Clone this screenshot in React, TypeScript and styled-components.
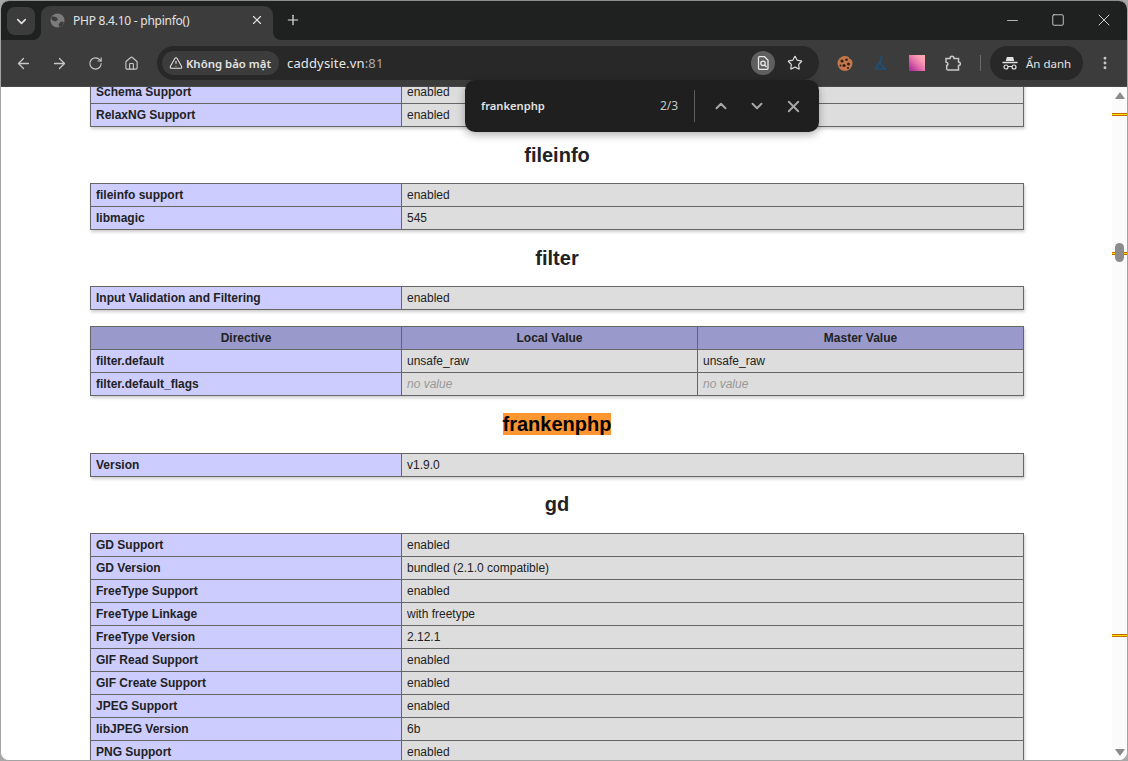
import React from 'react';
import styled, { createGlobalStyle } from 'styled-components';
import {
  ArrowLeft,
  ArrowRight,
  ChevronDown,
  ChevronUp,
  EllipsisVertical,
  House,
  Minus,
  Plus,
  RotateCw,
  Square,
  Star,
  TriangleAlert,
  X,
} from 'lucide-react';

const GlobalStyle = createGlobalStyle`
  html, body {
    margin: 0;
    padding: 0;
    width: 1128px;
    height: 761px;
    overflow: hidden;
    background: #a8a8a8;
  }
`;

const Win = styled.div`
  width: 1128px;
  height: 761px;
  box-sizing: border-box;
  border: 1px solid #a3a3a3;
  border-top-color: #8d8d8d;
  border-radius: 9px;
  overflow: hidden;
  display: flex;
  flex-direction: column;
  position: relative;
  background: #fff;
`;

const TabStrip = styled.div`
  height: 39px;
  background: #1f2120;
  display: flex;
  align-items: flex-end;
  flex: none;
  color: #e3e3e3;
  font-family: 'Noto Sans', 'Liberation Sans', sans-serif;
`;

const TabSearch = styled.div`
  width: 28px;
  height: 28px;
  margin: 0 0 5px 6px;
  border-radius: 8px;
  background: #3c3c3c;
  display: flex;
  align-items: center;
  justify-content: center;
  color: #e3e3e3;
`;

const Tab = styled.div`
  width: 232px;
  height: 34px;
  margin-left: 6px;
  padding: 0 9px 6px 9px;
  box-sizing: border-box;
  background: #3c3c3c;
  border-radius: 9px 9px 0 0;
  display: flex;
  align-items: center;
  position: relative;

  &::before,
  &::after {
    content: '';
    position: absolute;
    bottom: 0;
    width: 8px;
    height: 8px;
  }
  &::before {
    left: -8px;
    background: radial-gradient(circle at 0 0, #1f2120 7.5px, #3c3c3c 8.5px);
  }
  &::after {
    right: -8px;
    background: radial-gradient(circle at 100% 0, #1f2120 7.5px, #3c3c3c 8.5px);
  }
`;

const TabTitle = styled.span`
  flex: 1;
  margin-left: 8px;
  font-size: 12px;
  letter-spacing: -0.25px;
  color: #e3e3e3;
  white-space: nowrap;
`;

const NewTab = styled.div`
  margin: 0 0 12px 12px;
  width: 16px;
  height: 16px;
  color: #e3e3e3;
  display: flex;
`;

const WindowControls = styled.div`
  margin-left: auto;
  height: 38px;
  display: flex;
  align-self: flex-start;
`;

const WindowButton = styled.div`
  width: 46px;
  height: 38px;
  display: flex;
  align-items: center;
  justify-content: center;
  color: #f0f0f0;
`;

const Toolbar = styled.div`
  height: 47px;
  box-sizing: border-box;
  background: #3c3c3c;
  border-bottom: 1px solid #4a4a4a;
  flex: none;
  display: flex;
  align-items: center;
  padding-left: 4px;
  color: #c7c7c7;
  font-family: 'Noto Sans', 'Liberation Sans', sans-serif;
`;

const NavButton = styled.div`
  width: 36px;
  height: 34px;
  display: flex;
  align-items: center;
  justify-content: center;
  color: #c7c7c7;
`;

const Omnibox = styled.div`
  width: 662px;
  height: 34px;
  margin-left: 8px;
  flex: none;
  background: #282828;
  border-radius: 17px;
  display: flex;
  align-items: center;
  padding: 0 8px 0 5px;
  box-sizing: border-box;
`;

const SecurityChip = styled.div`
  width: 117px;
  height: 24px;
  border-radius: 12px;
  background: #3c3c3c;
  display: flex;
  align-items: center;
  padding-left: 7px;
  box-sizing: border-box;
  color: #e3e3e3;
  font-size: 11.4px;
  font-weight: 600;
  white-space: nowrap;
  flex: none;
  gap: 3px;
`;

const Url = styled.div`
  margin-left: 8px;
  flex: 1;
  font-size: 13px;
  letter-spacing: 0.15px;
  color: #e6e6e6;

  span {
    color: #a8a8a8;
  }
`;

const FindBadge = styled.div`
  width: 24px;
  height: 24px;
  border-radius: 50%;
  background: #5f5f5f;
  display: flex;
  align-items: center;
  justify-content: center;
`;

const StarSlot = styled.div`
  width: 32px;
  height: 24px;
  margin-left: 4px;
  display: flex;
  align-items: center;
  justify-content: center;
  color: #d6d6d6;
`;

const Extensions = styled.div`
  display: flex;
  align-items: center;
  margin-left: 8px;
`;

const ExtSlot = styled.div`
  width: 36px;
  height: 34px;
  display: flex;
  align-items: center;
  justify-content: center;
`;

const GradientTile = styled.div`
  width: 16px;
  height: 16px;
  background: linear-gradient(45deg, #a21f9c 0%, #dd66a8 40%, #fb98b4 70%, #ffb0b0 100%);
`;

const Divider = styled.div`
  width: 1px;
  height: 16px;
  margin: 0 9px 0 9px;
  background: #6a6a6a;
`;

const Profile = styled.div`
  width: 93px;
  height: 34px;
  border-radius: 17px;
  background: #282828;
  display: flex;
  align-items: center;
  padding-left: 12px;
  box-sizing: border-box;
  gap: 8px;
  color: #e3e3e3;
  font-size: 11.5px;
`;

const MenuButton = styled.div`
  width: 44px;
  height: 34px;
  display: flex;
  align-items: center;
  justify-content: center;
  color: #c7c7c7;
`;

const Body = styled.div`
  flex: 1;
  display: flex;
  min-height: 0;
  position: relative;
`;

const Page = styled.div`
  flex: 1;
  min-width: 0;
  overflow: hidden;
  background: #fff;
  color: #222;
  font-family: 'Liberation Sans', Arial, sans-serif;
  text-align: center;
  padding-left: 1px;
`;

const EdgeTicks = styled.div`
  position: absolute;
  left: -1px;
  top: 2px;
  width: 1px;
  height: 148px;
  background: repeating-linear-gradient(
    180deg,
    #8a5a3a 0,
    #8a5a3a 2px,
    transparent 2px,
    transparent 15px
  );
`;

const Table = styled.table<{ $first?: boolean }>`
  border-collapse: collapse;
  border: 0;
  width: 934px;
  margin: ${(p) => (p.$first ? '-7px auto 16px' : '16px auto')};
  text-align: left;
  box-shadow: 1px 2px 3px rgba(0, 0, 0, 0.2);
`;

const Label = styled.td`
  border: 1px solid #666;
  font-size: 12px;
  vertical-align: baseline;
  padding: 4px 5px;
  background: #ccf;
  width: 300px;
  font-weight: bold;
`;

const Value = styled.td`
  border: 1px solid #666;
  font-size: 12px;
  vertical-align: baseline;
  padding: 4px 5px;
  background: #ddd;
  max-width: 300px;
`;

const Head = styled.th<{ $width?: number }>`
  border: 1px solid #666;
  font-size: 12px;
  vertical-align: baseline;
  padding: 4px 5px;
  background: #99c;
  font-weight: bold;
  text-align: center;
  ${(p) => (p.$width ? `width: ${p.$width}px;` : '')}
`;

const NoValue = styled.i`
  color: #999;
`;

const Heading = styled.h2`
  font-size: 20px;
  font-weight: bold;
  margin: 16.6px 0;
`;

const Match = styled.span`
  background: #ff9632;
  color: #000;
`;

const Scrollbar = styled.div`
  width: 15px;
  flex: none;
  background: #fbfbfb;
  position: relative;
`;

const Arrow = styled.div<{ $down?: boolean }>`
  position: absolute;
  left: 3px;
  ${(p) => (p.$down ? 'bottom: 4px;' : 'top: 5px;')}
  width: 0;
  height: 0;
  border-left: 5px solid transparent;
  border-right: 5px solid transparent;
  ${(p) => (p.$down ? 'border-top: 7px solid #8a8a8a;' : 'border-bottom: 7px solid #8a8a8a;')}
`;

const Marker = styled.div<{ $top: number }>`
  position: absolute;
  left: 0;
  right: 0;
  top: ${(p) => p.$top}px;
  height: 3px;
  background: #ffe000;
  border-top: 1px solid #c46a00;
  border-bottom: 1px solid #c46a00;
  box-sizing: border-box;
`;

const Thumb = styled.div`
  position: absolute;
  left: 3px;
  top: 156px;
  width: 9px;
  height: 19px;
  border-radius: 5px;
  background: #8c8c8c;
`;

const FindBar = styled.div`
  position: absolute;
  left: 464px;
  top: 79px;
  width: 354px;
  height: 52px;
  box-sizing: border-box;
  background: #1f1f1f;
  border-radius: 10px;
  box-shadow: 0 3px 8px rgba(0, 0, 0, 0.3);
  display: flex;
  align-items: center;
  padding-left: 16px;
  font-family: 'Noto Sans', 'Liberation Sans', sans-serif;
`;

const FindText = styled.span`
  font-size: 11.2px;
  font-weight: 600;
  color: #e3e3e3;
  width: 179px;
  margin-bottom: 2px;
`;

const FindCount = styled.span`
  font-size: 12px;
  color: #c4c7c5;
  width: 34px;
  margin-bottom: 2px;
`;

const FindDivider = styled.div`
  width: 1px;
  height: 32px;
  background: #5e5e5e;
`;

const FindButton = styled.div`
  width: 36px;
  height: 20px;
  display: flex;
  align-items: center;
  justify-content: center;
  color: #a8a8a8;
`;

const FindButtons = styled.div`
  display: flex;
  margin-left: 8px;
`;

const rows = (data: [string, string][]) =>
  data.map(([k, v]) => (
    <tr key={k}>
      <Label>{k}</Label>
      <Value>{v}</Value>
    </tr>
  ));

function Globe() {
  return (
    <svg width="15" height="15" viewBox="0 0 16 16">
      <circle cx="8" cy="8" r="7.5" fill="#7b7b7b" />
      <path d="M3 3.5 7 4.5 8.5 7 6 9 3 8 1 6zM9 12l3-3 3 .5-2 4-3 1.5z" fill="#3c3c3c" />
    </svg>
  );
}

function FindPageIcon() {
  return (
    <svg width="16" height="16" viewBox="0 0 16 16" fill="none" stroke="#e8e8e8" strokeWidth="1.3">
      <path d="M4.5 14.3c-.6 0-1-.4-1-1V2.7c0-.6.4-1 1-1h5l3.500 3.500v8.100c0 .6-.4 1-1 1z" />
      <circle cx="8" cy="8.300" r="2.200" />
      <path d="M9.600 10l2 2" />
    </svg>
  );
}

function CookieIcon() {
  return (
    <svg width="16" height="16" viewBox="0 0 16 16">
      <circle cx="8" cy="8.500" r="7.500" fill="#c4774a" />
      <circle cx="14" cy="2" r="2.200" fill="#3c3c3c" />
      <circle cx="5" cy="6" r="1.600" fill="#33201a" />
      <circle cx="9.500" cy="4.800" r="1.300" fill="#33201a" />
      <circle cx="11.500" cy="9" r="1.500" fill="#33201a" />
      <circle cx="7" cy="10.500" r="1.600" fill="#33201a" />
      <circle cx="11" cy="13" r="1.100" fill="#33201a" />
      <circle cx="3.500" cy="10.500" r="0.900" fill="#33201a" />
    </svg>
  );
}

function BranchIcon() {
  return (
    <svg width="14" height="16" viewBox="0 0 14 16" fill="none" stroke="#1d4f77" strokeWidth="2">
      <path d="M8 1 6.500 6C5 9 3 11 1.500 14.500M6.500 8l2 3 3.500 3.500" />
      <path d="M3 14h8" strokeWidth="1.400" />
    </svg>
  );
}

function PuzzleIcon() {
  return (
    <svg width="18" height="18" viewBox="0 0 18 18" fill="none" stroke="#c7c7c7" strokeWidth="1.500">
      <path d="M2 4.500h4c0-3 4-3 4 0h4.500v3.500c2.500 0 2.500 3.500 0 3.500V16H4c-.8 0-1.300-.5-1.300-1.300V11.500c1.800-.5 1.800-3-.7-3.500z" />
    </svg>
  );
}

function IncognitoIcon() {
  return (
    <svg width="16" height="16" viewBox="0 0 16 16" fill="none" stroke="#e3e3e3" strokeWidth="1.200">
      <path d="M3.800 6 4.800 2h6.400l1 4z" fill="#e3e3e3" stroke="none" />
      <path d="M0.500 7.500h15" strokeWidth="1.300" />
      <circle cx="4" cy="12" r="2" />
      <circle cx="12" cy="12" r="2" />
      <path d="M6 11.500h4" />
    </svg>
  );
}

export default function App() {
  return (
    <>
      <GlobalStyle />
      <Win>
        <TabStrip>
          <TabSearch>
            <ChevronDown size={15} strokeWidth={2.5} />
          </TabSearch>
          <Tab>
            <Globe />
            <TabTitle>PHP 8.4.10 - phpinfo()</TabTitle>
            <X size={14} strokeWidth={2} color="#e3e3e3" />
          </Tab>
          <NewTab>
            <Plus size={16} strokeWidth={1.800} />
          </NewTab>
          <WindowControls>
            <WindowButton>
              <Minus size={17} strokeWidth={1} />
            </WindowButton>
            <WindowButton>
              <Square size={14} strokeWidth={1.300} />
            </WindowButton>
            <WindowButton>
              <X size={20} strokeWidth={1} />
            </WindowButton>
          </WindowControls>
        </TabStrip>
        <Toolbar>
          <NavButton>
            <ArrowLeft size={17} strokeWidth={1.800} />
          </NavButton>
          <NavButton>
            <ArrowRight size={17} strokeWidth={1.800} />
          </NavButton>
          <NavButton>
            <RotateCw size={15} strokeWidth={1.800} />
          </NavButton>
          <NavButton>
            <House size={15} strokeWidth={1.800} />
          </NavButton>
          <Omnibox>
            <SecurityChip>
              <TriangleAlert size={14} strokeWidth={1.800} />
              Không bảo mật
            </SecurityChip>
            <Url>
              caddysite.vn<span>:81</span>
            </Url>
            <FindBadge>
              <FindPageIcon />
            </FindBadge>
            <StarSlot>
              <Star size={16} strokeWidth={1.800} />
            </StarSlot>
          </Omnibox>
          <Extensions>
            <ExtSlot>
              <CookieIcon />
            </ExtSlot>
            <ExtSlot>
              <BranchIcon />
            </ExtSlot>
            <ExtSlot>
              <GradientTile />
            </ExtSlot>
            <ExtSlot>
              <PuzzleIcon />
            </ExtSlot>
          </Extensions>
          <Divider />
          <Profile>
            <IncognitoIcon />
            Ẩn danh
          </Profile>
          <MenuButton>
            <EllipsisVertical size={16} strokeWidth={2.400} />
          </MenuButton>
        </Toolbar>
        <Body>
          <EdgeTicks />
          <Page>
            <Table $first>
              <tbody>{rows([['Schema Support', 'enabled'], ['RelaxNG Support', 'enabled']])}</tbody>
            </Table>
            <Heading>fileinfo</Heading>
            <Table>
              <tbody>{rows([['fileinfo support', 'enabled'], ['libmagic', '545']])}</tbody>
            </Table>
            <Heading>filter</Heading>
            <Table>
              <tbody>{rows([['Input Validation and Filtering', 'enabled']])}</tbody>
            </Table>
            <Table>
              <tbody>
                <tr>
                  <Head>Directive</Head>
                  <Head $width={285}>Local Value</Head>
                  <Head>Master Value</Head>
                </tr>
                <tr>
                  <Label>filter.default</Label>
                  <Value>unsafe_raw</Value>
                  <Value>unsafe_raw</Value>
                </tr>
                <tr>
                  <Label>filter.default_flags</Label>
                  <Value>
                    <NoValue>no value</NoValue>
                  </Value>
                  <Value>
                    <NoValue>no value</NoValue>
                  </Value>
                </tr>
              </tbody>
            </Table>
            <Heading>
              <Match>frankenphp</Match>
            </Heading>
            <Table>
              <tbody>{rows([['Version', 'v1.9.0']])}</tbody>
            </Table>
            <Heading>gd</Heading>
            <Table>
              <tbody>
                {rows([
                  ['GD Support', 'enabled'],
                  ['GD Version', 'bundled (2.1.0 compatible)'],
                  ['FreeType Support', 'enabled'],
                  ['FreeType Linkage', 'with freetype'],
                  ['FreeType Version', '2.12.1'],
                  ['GIF Read Support', 'enabled'],
                  ['GIF Create Support', 'enabled'],
                  ['JPEG Support', 'enabled'],
                  ['libJPEG Version', '6b'],
                  ['PNG Support', 'enabled'],
                ])}
              </tbody>
            </Table>
          </Page>
          <Scrollbar>
            <Arrow />
            <Marker $top={26} />
            <Marker $top={165} />
            <Thumb />
            <Marker $top={547} />
            <Arrow $down />
          </Scrollbar>
        </Body>
        <FindBar>
          <FindText>frankenphp</FindText>
          <FindCount>2/3</FindCount>
          <FindDivider />
          <FindButtons>
            <FindButton>
              <ChevronUp size={18} strokeWidth={2.600} />
            </FindButton>
            <FindButton>
              <ChevronDown size={18} strokeWidth={2.600} />
            </FindButton>
            <FindButton>
              <X size={19} strokeWidth={2.400} />
            </FindButton>
          </FindButtons>
        </FindBar>
      </Win>
    </>
  );
}
